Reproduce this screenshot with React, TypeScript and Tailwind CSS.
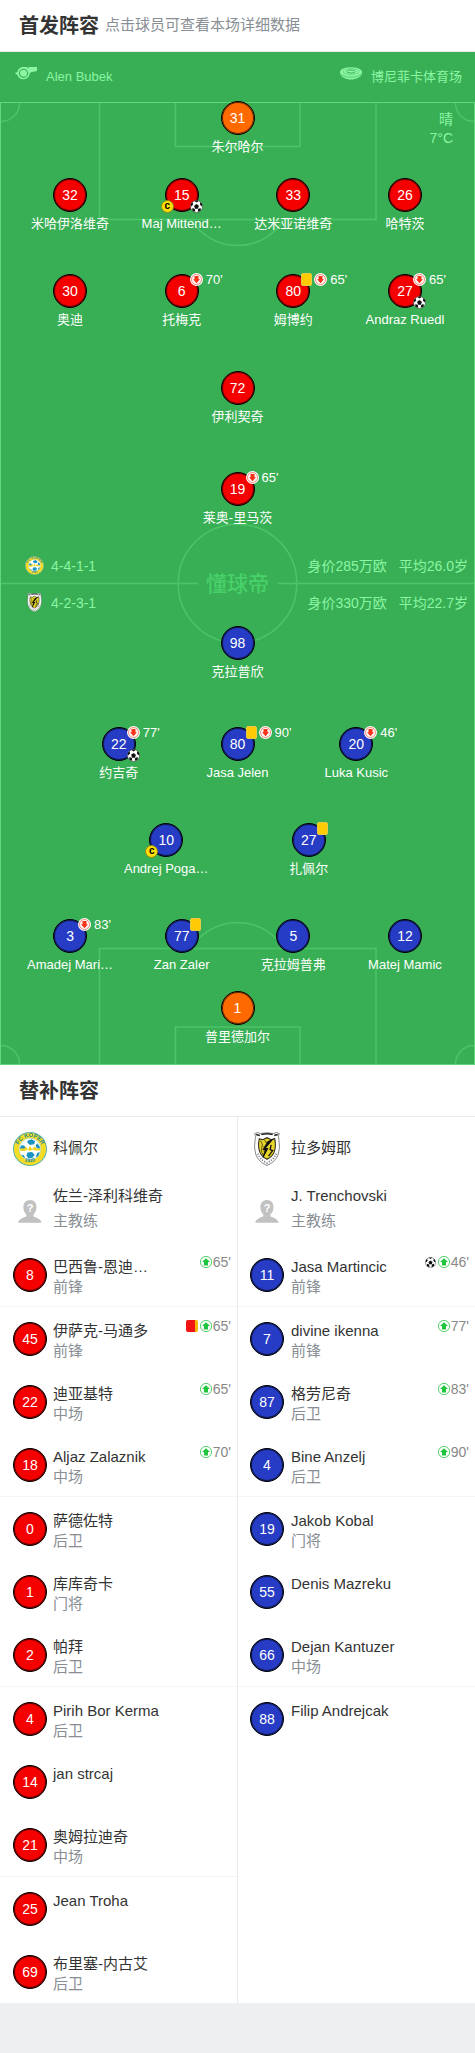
import { useId } from 'react';
import { clsx } from 'clsx';

type Side = 'home' | 'away';

type Player = {
  number: number;
  name: string;
  keeper?: boolean;
  captain?: boolean;
  goal?: boolean;
  yellow?: boolean;
  off?: number;
};

type Substitute = {
  number: number;
  name: string;
  position?: string;
  goal?: boolean;
  sentOff?: boolean;
  on?: number;
};

type Line = {
  className: string;
  players: Player[];
};

const homeLines: Line[] = [
  { className: '-mt-px', players: [{ number: 31, name: '朱尔哈尔', keeper: true }] },
  {
    className: 'mt-[21px] px-[3%]',
    players: [
      { number: 32, name: '米哈伊洛维奇' },
      { number: 15, name: 'Maj Mittend…', captain: true, goal: true },
      { number: 33, name: '达米亚诺维奇' },
      { number: 26, name: '哈特茨' },
    ],
  },
  {
    className: 'mt-10 px-[3%]',
    players: [
      { number: 30, name: '奥迪' },
      { number: 6, name: '托梅克', off: 70 },
      { number: 80, name: '姆博约', yellow: true, off: 65 },
      { number: 27, name: 'Andraz Ruedl', goal: true, off: 65 },
    ],
  },
  { className: 'mt-[41px]', players: [{ number: 72, name: '伊利契奇' }] },
  { className: 'mt-[45px]', players: [{ number: 19, name: '莱奥-里马茨', off: 65 }] },
];

const awayLines: Line[] = [
  { className: 'mt-[5px]', players: [{ number: 98, name: '克拉普欣' }] },
  {
    className: 'mt-[45px] px-[12.5%]',
    players: [
      { number: 22, name: '约吉奇', goal: true, off: 77 },
      { number: 80, name: 'Jasa Jelen', yellow: true, off: 90 },
      { number: 20, name: 'Luka Kusic', off: 46 },
    ],
  },
  {
    className: 'mt-10 px-[20%]',
    players: [
      { number: 10, name: 'Andrej Poga…', captain: true },
      { number: 27, name: '扎佩尔', yellow: true },
    ],
  },
  {
    className: 'mt-10 px-[3%]',
    players: [
      { number: 3, name: 'Amadej Mari…', off: 83 },
      { number: 77, name: 'Zan Zaler', yellow: true },
      { number: 5, name: '克拉姆普弗' },
      { number: 12, name: 'Matej Mamic' },
    ],
  },
  { className: 'mt-4', players: [{ number: 1, name: '普里德加尔', keeper: true }] },
];

const homeSubs: Substitute[] = [
  { number: 8, name: '巴西鲁-恩迪…', position: '前锋', on: 65 },
  { number: 45, name: '伊萨克-马通多', position: '前锋', sentOff: true, on: 65 },
  { number: 22, name: '迪亚基特', position: '中场', on: 65 },
  { number: 18, name: 'Aljaz Zalaznik', position: '中场', on: 70 },
  { number: 0, name: '萨德佐特', position: '后卫' },
  { number: 1, name: '库库奇卡', position: '门将' },
  { number: 2, name: '帕拜', position: '后卫' },
  { number: 4, name: 'Pirih Bor Kerma', position: '后卫' },
  { number: 14, name: 'jan strcaj' },
  { number: 21, name: '奥姆拉迪奇', position: '中场' },
  { number: 25, name: 'Jean Troha' },
  { number: 69, name: '布里塞-内古艾', position: '后卫' },
];

const awaySubs: Substitute[] = [
  { number: 11, name: 'Jasa Martincic', position: '前锋', goal: true, on: 46 },
  { number: 7, name: 'divine ikenna', position: '前锋', on: 77 },
  { number: 87, name: '格劳尼奇', position: '后卫', on: 83 },
  { number: 4, name: 'Bine Anzelj', position: '后卫', on: 90 },
  { number: 19, name: 'Jakob Kobal', position: '门将' },
  { number: 55, name: 'Denis Mazreku' },
  { number: 66, name: 'Dejan Kantuzer', position: '中场' },
  { number: 88, name: 'Filip Andrejcak' },
];

function WhistleIcon() {
  return (
    <svg viewBox="0 0 22 14" className="h-[14px] w-[22px]" fill="#8bf5a4" aria-hidden="true">
      <path d="M8.5 1h3.6l.8 1.4 1-1.4H22v4l-6.2 1.2-1.2 1.6A6.3 6.3 0 0 1 2.4 9L.4 7.8v-1l2-.8A6.3 6.3 0 0 1 8.5 1z" />
      <circle cx="8.5" cy="7.3" r="4.1" fill="none" stroke="#38af54" strokeWidth="1.1" />
    </svg>
  );
}

function StadiumIcon() {
  return (
    <svg viewBox="0 0 22 13" className="h-[13px] w-[22px]" aria-hidden="true">
      <path d="M0 4.5v2C1 10 6 12.5 11 12.5S21 10 22 6.5v-2z" fill="#8bf5a4" />
      <ellipse cx="11" cy="4.8" rx="11" ry="4.6" fill="#8bf5a4" />
      <ellipse cx="11" cy="4.5" rx="8" ry="3" fill="none" stroke="#38af54" strokeWidth=".4" />
      <ellipse cx="11" cy="4.5" rx="4.5" ry="1.5" fill="none" stroke="#38af54" strokeWidth=".9" />
      <path d="M.6 6.6C3 9.3 7 10.2 11 10.2s8-.9 10.4-3.6" fill="none" stroke="#38af54" strokeWidth=".6" />
    </svg>
  );
}

function BallIcon({ className }: { className?: string }) {
  return (
    <svg viewBox="0 0 26 26" className={className} role="img" aria-label="进球">
      <circle cx="13" cy="13" r="12" fill="#fff" stroke="#444" strokeWidth="1.2" />
      <path
        d="M13 8.2l4.8 3.5-1.8 5.600h-6l-1.800-5.600zM9 1.800Q13 .4 17 1.800l-4 3zM1.400 10.500Q2 6.500 4.800 4.200l1.600 4.600-4.200 4.200zM24.600 10.500Q24 6.500 21.200 4.200l-1.600 4.600 4.200 4.200zM4.200 20.600l.8-4.600 4.800 2 .6 5.600Q6.600 23.400 4.200 20.600zM21.800 20.600l-.8-4.600-4.800 2-.6 5.600Q19.400 23.400 21.800 20.600z"
        fill="#111"
      />
    </svg>
  );
}

function OffIcon() {
  return (
    <svg viewBox="0 0 26 26" className="size-[13px] shrink-0" role="img" aria-label="换下">
      <circle cx="13" cy="13" r="13" fill="#fff" />
      <circle cx="13" cy="13" r="10" fill="none" stroke="#f0523c" strokeWidth="1.4" />
      <path d="M9 6h8v6.500h3L13 20.500 6 12.500h3z" fill="#fa3218" />
    </svg>
  );
}

function OnIcon() {
  return (
    <svg viewBox="0 0 24 24" className="size-3 shrink-0" role="img" aria-label="换上">
      <circle cx="12" cy="12" r="11.2" fill="#fff" stroke="#22c03f" strokeWidth="1.500" />
      <path d="M8 19h8v-7h4l-8-7.500L4 12h4z" fill="#1fc53d" />
    </svg>
  );
}

function CaptainIcon() {
  return (
    <span className="absolute top-[22px] -left-1 flex size-[13px] items-center justify-center rounded-full border border-[#8b8a1c] bg-[#ffde00] pb-px text-[10px] leading-none font-bold text-black">
      c
    </span>
  );
}

function KoperCrest({ className }: { className?: string }) {
  const id = useId();
  return (
    <svg viewBox="0 0 66 66" className={className} role="img" aria-label="科佩尔">
      <circle cx="33" cy="33" r="32" fill="#f6dc22" stroke="#5db6a8" strokeWidth="2" />
      <circle cx="33" cy="33" r="21" fill="#fff" stroke="#8cc7cf" strokeWidth="1" />
      <path
        d="M28 17l8-3 7 4-2 6-8 1-5-4zM47 22l5 6v5l-6-2-2-5zM13 31l4-6 6 2 1 6-6 3zM28 40l9-1 5 5-4 6-8 1-4-5zM47 41l5-2-3 8-5 2zM16 44l5 1 3 6-4-2z"
        fill="#1b93c1"
      />
      <path d="M14 32h8l3-4 4 6 4-7 4 6 5-5 4 4h7v4H42l-4-2-5 3-5-3-5 3h-9z" fill="#f1d51f" />
      <path id={`${id}-top`} d="M9.500 33A23.500 23.500 0 0 1 56.500 33" fill="none" />
      <path id={`${id}-bottom`} d="M8 46A31 31 0 0 0 58 46" fill="none" />
      <g fill="#16889a" fontSize="11" fontWeight="700" textAnchor="middle">
        <text>
          <textPath href={`#${id}-top`} startOffset="50%">
            FC KOPER
          </textPath>
        </text>
        <text fontSize="10">
          <textPath href={`#${id}-bottom`} startOffset="50%">
            1920
          </textPath>
        </text>
      </g>
    </svg>
  );
}

function RadomljeCrest({ className }: { className?: string }) {
  return (
    <svg viewBox="0 0 66 66" className={className} role="img" aria-label="拉多姆耶">
      <path
        d="M9 3l6-2 5 2q13-3 26 0l5-2 6 2q-3 5-1 11 3 16-1 29-5 15-22 22-17-7-22-22-4-13-1-29 2-6-1-11z"
        fill="#fff"
        stroke="#66666d"
        strokeWidth="1.500"
      />
      <path d="M12 5l7 2M54 5l-7 2M22 5q11-3 22 0" stroke="#222" strokeWidth="3" fill="none" />
      <path d="M18 13l7 2 8-4 8 4 7-2q3 16-1 26-4 9-14 14-10-5-14-14-4-10-1-26z" fill="#e9d62a" stroke="#26241a" strokeWidth="2" />
      <path d="M20 17q6 6 3 13t3 15M28 16l5 6M27 27q3 6 0 12" fill="none" stroke="#6b6014" strokeWidth="2" />
      <path d="M47 12L31 31h5L26 50l-2-1 5-14h-5l10-17z" fill="#111" />
      <path d="M41 25l-2 9 5 2-8 11" fill="none" stroke="#111" strokeWidth="2.500" />
      <path d="M15 42q5 12 18 18 13-6 18-18" fill="none" stroke="#77777f" strokeWidth="3.500" strokeDasharray="2 3" />
    </svg>
  );
}

function CoachAvatar() {
  return (
    <svg viewBox="0 0 34 34" className="mt-[11px] size-[34px] shrink-0" aria-hidden="true">
      <path
        d="M17 6c4.200 0 6.500 3 6.500 7.200 0 3.300-1.300 5.600-3 7.200v2.200c3.500 1.300 7.300 2.500 8 6.100H5.300c.7-3.600 4.500-4.800 8-6.100v-2.200c-1.700-1.600-2.900-3.900-2.900-7.200C10.400 9 12.800 6 17 6z"
        fill="#c1c1c1"
      />
      <text x="17" y="18" fontSize="11" fontWeight="700" textAnchor="middle" fill="#fff">
        ?
      </text>
    </svg>
  );
}

function PitchMarkings() {
  return (
    <svg
      viewBox="0 0 475 963"
      preserveAspectRatio="none"
      className="absolute inset-0 h-full w-full"
      fill="none"
      stroke="#4bc568"
      strokeWidth="1.500"
      aria-hidden="true"
    >
      <path d="M99.500 1v116.500h276.500V1M175.500 1v43.500h124.500V1" />
      <path d="M191 117.500a54.500 54.500 0 0 0 93 0" />
      <path d="M99.500 962V846.500h276.500V962M175.500 962V925h124.500v37" />
      <path d="M191 846.500a54.500 54.500 0 0 1 93 0" />
      <path d="M1 19.500A18.500 18.500 0 0 0 19.500 1M455.500 1A18.500 18.500 0 0 0 474 19.500M1 943.500A18.500 18.500 0 0 1 19.500 962M455.500 962A18.500 18.500 0 0 1 474 943.500" />
      <path d="M1 481.500h196.500M277.500 481.500H474" />
      <circle cx="237.500" cy="481.500" r="59.300" />
      <rect x=".5" y=".5" width="474" height="962" stroke="#5fd87c" strokeWidth="1" />
    </svg>
  );
}

function Shirt({ number, side, keeper }: { number: number; side: Side; keeper?: boolean }) {
  return (
    <span
      className={clsx(
        'flex size-[34px] shrink-0 items-center justify-center rounded-full border border-black text-sm text-white inset-ring inset-ring-black/60',
        keeper ? 'bg-[#ff6a00]' : side === 'home' ? 'bg-[#f50000]' : 'bg-[#263cc4]',
      )}
    >
      {number}
    </span>
  );
}

function PitchPlayer({ player, side }: { player: Player; side: Side }) {
  return (
    <a href="#player" className="flex flex-1 flex-col items-center">
      <span className="relative">
        <Shirt number={player.number} side={side} keeper={player.keeper} />
        <span className="absolute -top-px left-[25px] flex items-center gap-[2px]">
          {player.yellow && <span className="h-[13px] w-[11px] rounded-xs border border-[#e8c94a] bg-[#ffcb05]" />}
          {player.off && (
            <>
              <OffIcon />
              <span className="pl-px text-[13px] leading-3 text-white">{player.off}'</span>
            </>
          )}
        </span>
        {player.captain && <CaptainIcon />}
        {player.goal && <BallIcon className="absolute top-[22px] left-[25px] size-[13px]" />}
      </span>
      <span className="mt-[2px] text-[13px] leading-5 whitespace-nowrap text-white">{player.name}</span>
    </a>
  );
}

function TeamLines({ lines, side }: { lines: Line[]; side: Side }) {
  return (
    <>
      {lines.map((line, i) => (
        <div key={i} className={clsx('flex', line.className)}>
          {line.players.map((player) => (
            <PitchPlayer key={player.number} player={player} side={side} />
          ))}
        </div>
      ))}
    </>
  );
}

function SubstituteRow({ sub, side, divider }: { sub: Substitute; side: Side; divider: boolean }) {
  return (
    <li className={clsx(divider && 'border-b border-[#f5f5f5]')}>
      <a
        href="#player"
        className={clsx('flex h-[63px] items-start pt-[9px] pr-[6px]', side === 'home' ? 'gap-[6px] pl-[13px]' : 'gap-[7px] pl-3')}
      >
        <span className="mt-[6px]">
          <Shirt number={sub.number} side={side} />
        </span>
        <span className="mt-[5px] flex flex-1 flex-col text-[15px] leading-5 whitespace-nowrap">
          <span className="text-[#333]">{sub.name}</span>
          <span className="text-[#888e94]">{sub.position}</span>
        </span>
        {sub.on && (
          <span className="flex items-center text-sm leading-5 text-[#888]">
            {sub.goal && <BallIcon className="mr-[2px] size-[11px]" />}
            {sub.sentOff && <span className="mr-[2px] size-3 rounded-xs border-r-3 border-[#f5b800] bg-[#f01414]" />}
            <OnIcon />
            <span className="ml-px">{sub.on}'</span>
          </span>
        )}
      </a>
    </li>
  );
}

type BenchProps = {
  side: Side;
  team: string;
  coach: string;
  subs: Substitute[];
};

function Bench({ side, team, coach, subs }: BenchProps) {
  const Crest = side === 'home' ? KoperCrest : RadomljeCrest;
  const indent = side === 'home' ? 'gap-[6px] pl-[13px]' : 'gap-[7px] pl-3';

  return (
    <div className={clsx('min-w-0 flex-1', side === 'home' && 'border-r border-[#ebebeb]')}>
      <div className={clsx('flex h-[63px] items-center', indent)}>
        <Crest className="size-[34px]" />
        <h3 className="text-[15px] text-[#333]">{team}</h3>
      </div>
      <div className={clsx('flex h-[63px] pt-[3px]', indent)}>
        <CoachAvatar />
        <p className="flex flex-col text-[15px] leading-[25px]">
          <span className="text-[#333]">{coach}</span>
          <span className="text-[#888e94]">主教练</span>
        </p>
      </div>
      <ul>
        {subs.map((sub, i) => (
          <SubstituteRow key={sub.number} sub={sub} side={side} divider={i % 3 === 0} />
        ))}
      </ul>
    </div>
  );
}

export default function App() {
  return (
    <main className="min-h-screen bg-[#edeff1] pb-[50px] font-['Liberation_Sans','Noto_Sans_CJK_SC',sans-serif]">
      <section className="bg-white">
        <header className="flex h-[52px] items-center gap-[6px] border-b border-[#ebebeb] px-[19px]">
          <h2 className="text-xl font-bold text-[#333]">首发阵容</h2>
          <p className="text-[15px] text-[#888e94]">点击球员可查看本场详细数据</p>
        </header>

        <div className="bg-[#38af54] text-[#8bf5a4]">
          <div className="flex h-[50px] justify-between pr-[13px] pl-[15px] text-[13px]">
            <span className="flex items-center gap-[9px]">
              <span className="mb-2">
                <WhistleIcon />
              </span>
              Alen Bubek
            </span>
            <span className="flex items-center gap-[9px]">
              <span className="mb-2">
                <StadiumIcon />
              </span>
              博尼菲卡体育场
            </span>
          </div>

          <div className="relative">
            <PitchMarkings />
            <p className="absolute top-2 right-[22px] text-right text-sm leading-[19px]">
              晴
              <br />
              7°C
            </p>
            <div className="relative flex flex-col pb-[18px]">
              <TeamLines lines={homeLines} side="home" />
              <div className="mt-[19px] grid grid-cols-[1fr_auto_1fr] items-center text-sm">
                <div className="pl-[25px]">
                  <p className="flex h-[37px] items-center gap-[7px]">
                    <KoperCrest className="size-[19px]" />
                    4-4-1-1
                  </p>
                  <p className="flex h-[37px] items-center gap-[7px]">
                    <RadomljeCrest className="size-[19px]" />
                    4-2-3-1
                  </p>
                </div>
                <span className="text-[21px] font-medium text-[#48d169]">懂球帝</span>
                <div className="flex flex-col items-end pr-[7px] whitespace-nowrap">
                  <p className="flex h-[37px] items-center gap-3">
                    <span>身价285万欧</span>
                    <span>平均26.0岁</span>
                  </p>
                  <p className="flex h-[37px] items-center gap-3">
                    <span>身价330万欧</span>
                    <span>平均22.7岁</span>
                  </p>
                </div>
              </div>
              <TeamLines lines={awayLines} side="away" />
            </div>
          </div>
        </div>
      </section>

      <section className="bg-white">
        <header className="flex h-[52px] items-center border-b border-[#ebebeb] px-[19px]">
          <h2 className="text-xl font-bold text-[#333]">替补阵容</h2>
        </header>
        <div className="flex">
          <Bench side="home" team="科佩尔" coach="佐兰-泽利科维奇" subs={homeSubs} />
          <Bench side="away" team="拉多姆耶" coach="J. Trenchovski" subs={awaySubs} />
        </div>
      </section>
    </main>
  );
}
